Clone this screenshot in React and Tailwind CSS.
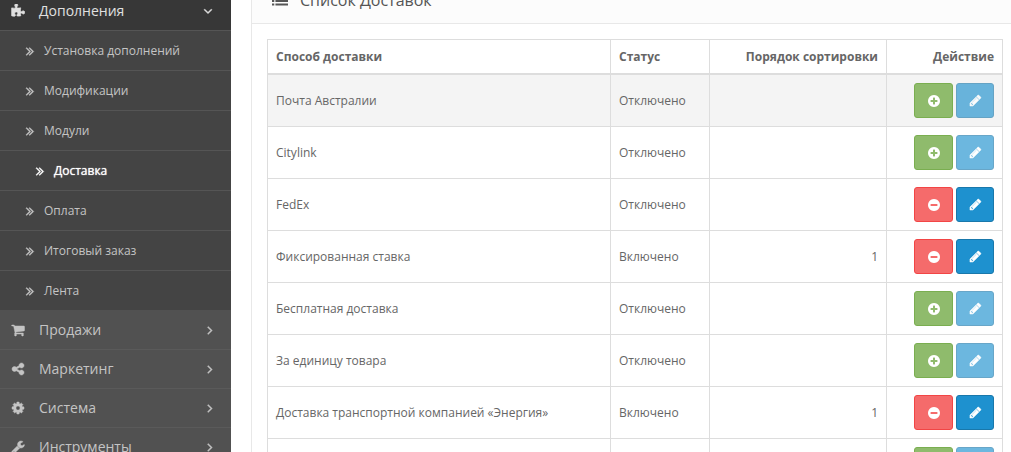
const CIRCLE =
  'm320-64q0 209-103 385.5t-279.5 279.5-385.5 103-385.5-103-279.5-279.5-103-385.5 103-385.5 279.5-279.5 385.5-103 385.5 103 279.5 279.5 103 385.5z';

const ICONS = {
  puzzle:
    'M1755 1083q0 81-44.5 135t-123.5 54q-41 0-77.5-17.5t-59-38-56.5-38-71-17.5q-110 0-110 124 0 39 16 115t15 115v5q-22 0-33 1-34 3-97.5 11.5t-115.5 13.5-98 5q-61 0-103-26.5t-42-83.5q0-37 17.5-71t38-56.5 38-59 17.5-77.5q0-79-54-123.5t-135-44.5q-84 0-143 45.5t-59 127.5q0 43 15 83t33.5 64.5 33.5 53 15 50.5q0 45-46 89-37 35-117 35-95 0-245-24-9-2-27.5-4t-27.5-4l-13-2q-1 0-3-1-2 0-2-1v-1024q2 1 17.5 3.5t34 5 21.5 3.5q150 24 245 24 80 0 117-35 46-44 46-89 0-22-15-50.5t-33.5-53-33.5-64.5-15-83q0-82 59-127.5t144-45.5q80 0 134 44.5t54 123.5q0 41-17.5 77.5t-38 59-38 56.5-17.5 71q0 57 42 83.5t103 26.5q64 0 180-15t163-17v2q-1 2-3.5 17.5t-5 34-3.5 21.5q-24 150-24 245 0 80 35 117 44 46 89 46 22 0 50.5-15t53-33.5 64.5-33.5 83-15q82 0 127.5 59t45.5 143z',
  cart:
    'M704 1536q0 52-38 90t-90 38-90-38-38-90 38-90 90-38 90 38 38 90zm896 0q0 52-38 90t-90 38-90-38-38-90 38-90 90-38 90 38 38 90zm128-1088v512q0 24-16.5 42.5t-40.5 21.5l-1044 122q13 60 13 70 0 16-24 64h920q26 0 45 19t19 45-19 45-45 19h-1024q-26 0-45-19t-19-45q0-11 8-31.5t16-36 21.5-40 15.5-29.5l-177-823h-204q-26 0-45-19t-19-45 19-45 45-19h256q16 0 28.5 6.5t19.5 15.5 13 24.5 8 26 5.5 29.5 4.5 26h1201q26 0 45 19t19 45z',
  share:
    'M1344 1024q133 0 226.5 93.5t93.5 226.5-93.5 226.5-226.5 93.5-226.5-93.5-93.5-226.5q0-12 2-34l-360-180q-92 86-218 86-133 0-226.5-93.5t-93.5-226.5 93.5-226.5 226.5-93.5q126 0 218 86l360-180q-2-22-2-34 0-133 93.5-226.5t226.5-93.5 226.5 93.5 93.5 226.5-93.5 226.5-226.5 93.5q-126 0-218-86l-360 180q2 22 2 34t-2 34l360 180q92-86 218-86z',
  cog:
    'M1152 896q0-106-75-181t-181-75-181 75-75 181 75 181 181 75 181-75 75-181zm512-109v222q0 12-8 23t-20 13l-185 28q-19 54-39 91 35 50 107 138 10 12 10 25t-9 23q-27 37-99 108t-94 71q-12 0-26-9l-138-108q-44 23-91 38-16 136-29 186-7 28-36 28h-222q-14 0-24.5-8.5t-11.5-21.5l-28-184q-49-16-90-37l-141 107q-10 9-25 9-14 0-25-11-126-114-165-168-7-10-7-23 0-12 8-23 15-21 51-66.5t54-70.5q-27-50-41-99l-183-27q-13-2-21-12.5t-8-23.5v-222q0-12 8-23t19-13l186-28q14-46 39-92-40-57-107-138-10-12-10-24 0-10 9-23 26-36 98.5-107.5t94.5-71.5q13 0 26 10l138 107q44-23 91-38 16-136 29-186 7-28 36-28h222q14 0 24.5 8.5t11.5 21.5l28 184q49 16 90 37l142-107q9-9 24-9 13 0 25 10 129 119 165 170 7 8 7 22 0 12-8 23-15 21-51 66.5t-54 70.5q26 50 41 98l183 28q13 2 21 12.5t8 23.5z',
  wrench:
    'M448 1472q0-26-19-45t-45-19-45 19-19 45 19 45 45 19 45-19 19-45zm644-420l-682 682q-37 37-90 37-52 0-91-37l-106-108q-38-36-38-90 0-53 38-91l681-681q39 98 114.5 173.5t173.5 114.5zm634-435q0 39-23 106-47 134-164.5 217.5t-258.5 83.5q-185 0-316.5-131.5t-131.5-316.5 131.5-316.5 316.5-131.5q58 0 121.5 16.5t107.5 46.5q16 11 16 28t-16 28l-293 169v224l193 107q5-3 79-48.5t135.5-81 70.5-35.5q15 0 23.5 10t8.5 25z',
  list:
    'M0 128h256v224h-256zM0 512h256v224h-256zM0 896h256v224h-256zM0 1280h256v224h-256zM384 128h1408v224h-1408zM384 512h1408v224h-1408zM384 896h1408v224h-1408zM384 1280h1408v224h-1408z',
  angleRight:
    'M1171 960q0 13-10 23l-466 466q-10 10-23 10t-23-10l-50-50q-10-10-10-23t10-23l393-393-393-393q-10-10-10-23t10-23l50-50q10-10 23-10t23 10l466 466q10 10 10 23z',
  angleDown:
    'M1395 736q0 13-10 23l-466 466q-10 10-23 10t-23-10l-466-466q-10-10-10-23t10-23l50-50q10-10 23-10t23 10l393 393 393-393q10-10 23-10t23 10l50 50q10 10 10 23z',
  angleDouble:
    'M979 960q0 13-10 23l-466 466q-10 10-23 10t-23-10l-50-50q-10-10-10-23t10-23l393-393-393-393q-10-10-10-23t10-23l50-50q10-10 23-10t23 10l466 466q10 10 10 23zm384 0q0 13-10 23l-466 466q-10 10-23 10t-23-10l-50-50q-10-10-10-23t10-23l393-393-393-393q-10-10-10-23t10-23l50-50q10-10 23-10t23 10l466 466q10 10 10 23z',
  plus:
    'M1344 960v-128q0-26-19-45t-45-19h-256v-256q0-26-19-45t-45-19h-128q-26 0-45 19t-19 45v256h-256q-26 0-45 19t-19 45v128q0 26 19 45t45 19h256v256q0 26 19 45t45 19h128q26 0 45-19t19-45v-256h256q26 0 45-19t19-45z' +
    CIRCLE,
  minus:
    'M1344 960v-128q0-26-19-45t-45-19h-768q-26 0-45 19t-19 45v128q0 26 19 45t45 19h768q26 0 45-19t19-45z' + CIRCLE,
  pencil:
    'M491 1536l91-91-235-235-91 91v107h128v128h107zm523-928q0-22-22-22-10 0-17 7l-542 542q-7 7-7 17 0 22 22 22 10 0 17-7l542-542q7-7 7-17zm-54-192l416 416-832 832h-416v-416zm683 96q0 53-37 90l-166 166-416-416 166-165q36-38 90-38 53 0 91 38l235 234q37 39 37 91z',
};

function Icon({ name, className }) {
  return (
    <svg viewBox="0 0 1792 1792" fill="currentColor" aria-hidden="true" className={`shrink-0 ${className}`}>
      <path d={ICONS[name]} />
    </svg>
  );
}

const submenu = [
  { label: 'Установка дополнений' },
  { label: 'Модификации' },
  { label: 'Модули' },
  { label: 'Доставка', active: true },
  { label: 'Оплата' },
  { label: 'Итоговый заказ' },
  { label: 'Лента' },
];

const menu = [
  { icon: 'cart', label: 'Продажи' },
  { icon: 'share', label: 'Маркетинг' },
  { icon: 'cog', label: 'Система' },
  { icon: 'wrench', label: 'Инструменты' },
];

const methods = [
  { name: 'Почта Австралии', status: 'Отключено', highlighted: true },
  { name: 'Citylink', status: 'Отключено' },
  { name: 'FedEx', status: 'Отключено', installed: true },
  { name: 'Фиксированная ставка', status: 'Включено', sort: 1, installed: true },
  { name: 'Бесплатная доставка', status: 'Отключено' },
  { name: 'За единицу товара', status: 'Отключено' },
  { name: 'Доставка транспортной компанией «Энергия»', status: 'Включено', sort: 1, installed: true },
  { name: 'Самовывоз', status: 'Отключено' },
];

function Sidebar() {
  return (
    <nav className="-mt-2 w-[231px] shrink-0 bg-[#515151] text-[#c4c4c4]">
      <a href="#" className="flex h-[38px] items-center bg-[#373737] pr-4 pl-[11px] text-sm text-[#e0e0e0]">
        <Icon name="puzzle" className="size-[14px] stroke-current [stroke-width:100]" />
        <span className="ml-[14px] flex-1">Дополнения</span>
        <Icon name="angleDown" className="size-[14px] stroke-current [stroke-width:60]" />
      </a>
      <ul className="bg-[#444444] text-xs">
        {submenu.map((item) => (
          <li key={item.label} className="border-t border-[#555555]">
            <a
              href="#"
              className={`flex h-[39px] items-center gap-[7px] ${
                item.active ? 'pl-[33px] text-white [text-shadow:0_0_1px_#fff]' : 'pl-[23px]'
              }`}
            >
              <Icon name="angleDouble" className="size-[14px] stroke-current [stroke-width:60]" />
              {item.label}
            </a>
          </li>
        ))}
      </ul>
      <ul className="text-sm">
        {menu.map((item) => (
          <li key={item.label} className="border-t border-[#5a5a5a] first:border-[#515151]">
            <a href="#" className="flex h-[38px] items-center pr-[14px] pl-[11px]">
              <Icon name={item.icon} className="size-[14px] stroke-current [stroke-width:60]" />
              <span className="ml-[14px] flex-1">{item.label}</span>
              <Icon name="angleRight" className="size-[14px] stroke-current [stroke-width:60]" />
            </a>
          </li>
        ))}
      </ul>
    </nav>
  );
}

const BUTTON = 'flex h-[35px] items-center justify-center rounded-[3px] border text-white';

function Actions({ installed }) {
  return (
    <div className="flex justify-end gap-[3px]">
      {installed ? (
        <button type="button" aria-label="Удалить" className={`${BUTTON} w-[39px] border-[#f24545] bg-[#f56b6b]`}>
          <Icon name="minus" className="size-[14px]" />
        </button>
      ) : (
        <button type="button" aria-label="Установить" className={`${BUTTON} w-[39px] border-[#7aae50] bg-[#8fbb6c]`}>
          <Icon name="plus" className="size-[14px]" />
        </button>
      )}
      <button
        type="button"
        aria-label="Редактировать"
        disabled={!installed}
        className={`${BUTTON} w-[38px] border-[#1978ab] bg-[#1e91cf] disabled:opacity-65`}
      >
        <Icon name="pencil" className="size-[13px] stroke-current [stroke-width:60]" />
      </button>
    </div>
  );
}

export default function App() {
  return (
    <div className="flex h-screen overflow-hidden bg-white font-['Open_Sans',sans-serif] text-xs text-[#666666]">
      <Sidebar />
      <main className="-mt-6 min-w-0 flex-1 pl-5">
        <section className="border-l border-[#e8e8e8]">
          <h3 className="flex items-center gap-3 border-b border-[#e8e8e8] bg-[#fcfcfc] pt-3 pb-[11px] pl-5 text-base text-[#555555]">
            <Icon name="list" className="size-4" />
            Список Доставок
          </h3>
          <div className="py-[15px] pr-2 pl-[15px]">
            <table className="w-full table-fixed border-collapse border border-[#dddddd] [&_td]:border [&_td]:border-[#dddddd] [&_td]:p-2 [&_th]:border [&_th]:border-b-2 [&_th]:border-[#dddddd] [&_th]:p-2">
              <colgroup>
                <col />
                <col className="w-[99px]" />
                <col className="w-[177px]" />
                <col className="w-[116px]" />
              </colgroup>
              <thead>
                <tr className="leading-[17px]">
                  <th className="text-left">Способ доставки</th>
                  <th className="text-left">Статус</th>
                  <th className="text-right">Порядок сортировки</th>
                  <th className="text-right">Действие</th>
                </tr>
              </thead>
              <tbody>
                {methods.map((method) => (
                  <tr key={method.name} className={method.highlighted ? 'bg-[#f4f4f4]' : ''}>
                    <td>{method.name}</td>
                    <td>{method.status}</td>
                    <td className="text-right">{method.sort}</td>
                    <td>
                      <Actions installed={method.installed} />
                    </td>
                  </tr>
                ))}
              </tbody>
            </table>
          </div>
        </section>
      </main>
    </div>
  );
}
